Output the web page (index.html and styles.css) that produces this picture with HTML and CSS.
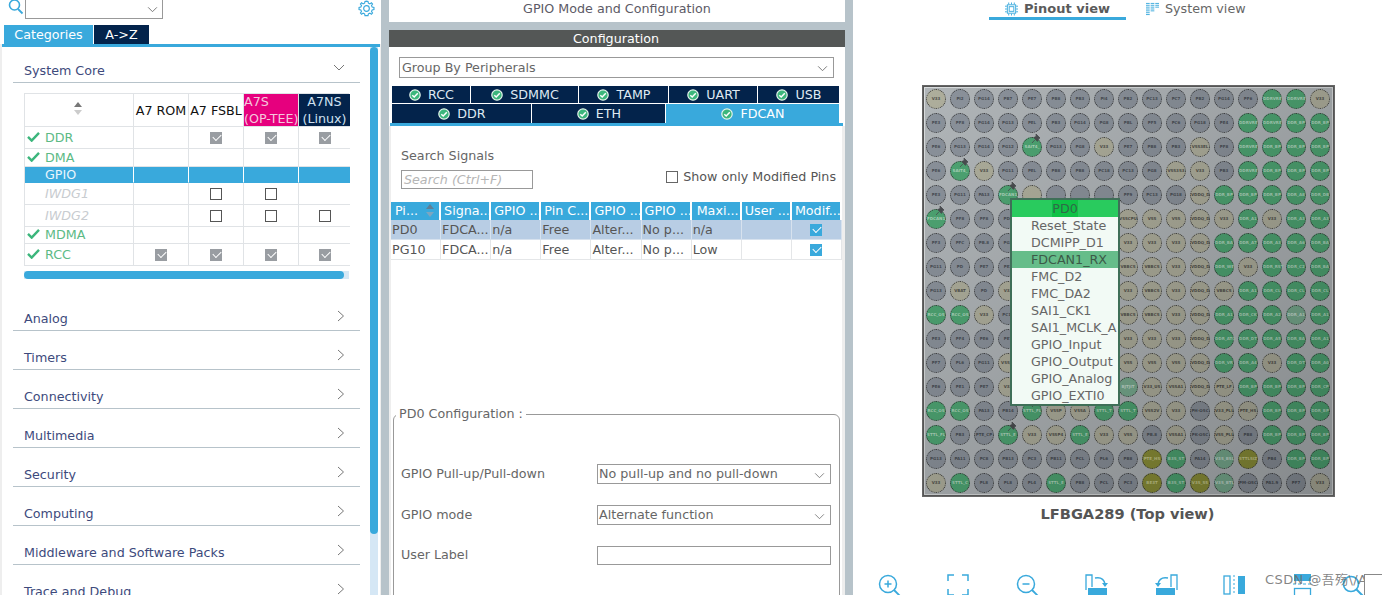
FILE: index.html
```html
<!DOCTYPE html>
<html lang="en">
<head>
<meta charset="utf-8">
<title>GPIO Mode and Configuration</title>
<link rel="stylesheet" href="styles.css">
</head>
<body>
<svg class="defs" width="0" height="0" aria-hidden="true">
  <symbol id="tick" viewBox="0 0 12 12"><circle cx="6" cy="6" r="5.2" fill="#3cb67c" stroke="#e6f4ec" stroke-width="1.2"/><path d="M3.3 6.2 5.2 8 8.8 4.2" fill="none" stroke="#fff" stroke-width="1.5"/></symbol>
  <symbol id="green" viewBox="0 0 14 12"><path d="M1 6.5 5 10.5 13 2" fill="none" stroke="#3cb67c" stroke-width="2.6"/></symbol>
  <symbol id="tack" viewBox="0 0 10 10"><path d="M5 0 9 4 7.6 4.8 6.4 7.4 2.8 3.6 5.2 2.4ZM3.8 6 1 9" fill="#4a4d50" stroke="#4a4d50" stroke-width=".8"/></symbol>
</svg>

<aside class="left">
  <div class="search-row">
    <svg class="search-ico" viewBox="0 0 16 16"><circle cx="6.5" cy="6" r="5" fill="none" stroke="#39a9dc" stroke-width="1.6"/><path d="M10 10l4.5 4.5" stroke="#39a9dc" stroke-width="1.8"/></svg>
    <div class="search-box"><svg class="chev" viewBox="0 0 12 8"><path d="M1 1.5 6 6.5 11 1.5" fill="none" stroke="#777" stroke-width="1.1"/></svg></div>
    <svg class="gear" viewBox="0 0 18 18"><path d="M9 1.2 10.6 1.5 11 3.4 12.6 4.1 14.2 3 15.4 4.2 14.3 5.8 15 7.4 16.9 7.8V10.2L15 10.6 14.3 12.2 15.4 13.8 14.2 15 12.6 13.9 11 14.6 10.6 16.5H7.4L7 14.6 5.4 13.9 3.8 15 2.6 13.8 3.7 12.2 3 10.6 1.1 10.2V7.8L3 7.4 3.7 5.8 2.6 4.2 3.8 3 5.4 4.1 7 3.4 7.4 1.5Z" fill="none" stroke="#39a9dc" stroke-width="1.2"/><circle cx="9" cy="9" r="3" fill="none" stroke="#39a9dc" stroke-width="1.2"/></svg>
  </div>
  <div class="left-tabs">
    <span class="ltab on">Categories</span>
    <span class="ltab">A-&gt;Z</span>
  </div>
  <div class="left-body">
    <div class="cats">
      <div class="cat first"><span>System Core</span><svg class="cat-chev" viewBox="0 0 12 8"><path d="M1 1 6 6 11 1" fill="none" stroke="#777" stroke-width="1"/></svg></div>
      <div class="mx">
        <div class="c hd"><svg class="sort" viewBox="0 0 10 14"><path d="M5 0 9 5H1Z" fill="#777"/><path d="M5 13 9 8H1Z" fill="#ccc"/></svg></div>
        <div class="c hd t">A7 ROM</div><div class="c hd t">A7 FSBL</div><div class="c hd pink">A7S<br>(OP-TEE)</div><div class="c hd navy">A7NS<br>(Linux)</div>

        <div class="c n ok"><svg class="gk"><use href="#green"/></svg>DDR</div><div class="c"></div><div class="c"><i class="cb dis"></i></div><div class="c"><i class="cb dis"></i></div><div class="c"><i class="cb dis"></i></div>
        <div class="c n ok"><svg class="gk"><use href="#green"/></svg>DMA</div><div class="c"></div><div class="c"></div><div class="c"></div><div class="c"></div>
        <div class="c n sel">GPIO</div><div class="c sel"></div><div class="c sel"></div><div class="c sel"></div><div class="c sel"></div>
        <div class="c n off">IWDG1</div><div class="c"></div><div class="c"><i class="cb"></i></div><div class="c"><i class="cb"></i></div><div class="c"></div>
        <div class="c n off">IWDG2</div><div class="c"></div><div class="c"><i class="cb"></i></div><div class="c"><i class="cb"></i></div><div class="c"><i class="cb"></i></div>
        <div class="c n ok"><svg class="gk"><use href="#green"/></svg>MDMA</div><div class="c"></div><div class="c"></div><div class="c"></div><div class="c"></div>
        <div class="c n ok"><svg class="gk"><use href="#green"/></svg>RCC</div><div class="c"><i class="cb dis"></i></div><div class="c"><i class="cb dis"></i></div><div class="c"><i class="cb dis"></i></div><div class="c"><i class="cb dis"></i></div>
      </div>
      <div class="hbar"><div class="hthumb"></div></div>
      <div class="cat"><span>Analog</span><svg class="cat-chev r" viewBox="0 0 8 12"><path d="M1 1 6.5 6 1 11" fill="none" stroke="#777" stroke-width="1"/></svg></div>
      <div class="cat"><span>Timers</span><svg class="cat-chev r" viewBox="0 0 8 12"><path d="M1 1 6.5 6 1 11" fill="none" stroke="#777" stroke-width="1"/></svg></div>
      <div class="cat"><span>Connectivity</span><svg class="cat-chev r" viewBox="0 0 8 12"><path d="M1 1 6.5 6 1 11" fill="none" stroke="#777" stroke-width="1"/></svg></div>
      <div class="cat"><span>Multimedia</span><svg class="cat-chev r" viewBox="0 0 8 12"><path d="M1 1 6.5 6 1 11" fill="none" stroke="#777" stroke-width="1"/></svg></div>
      <div class="cat"><span>Security</span><svg class="cat-chev r" viewBox="0 0 8 12"><path d="M1 1 6.5 6 1 11" fill="none" stroke="#777" stroke-width="1"/></svg></div>
      <div class="cat"><span>Computing</span><svg class="cat-chev r" viewBox="0 0 8 12"><path d="M1 1 6.5 6 1 11" fill="none" stroke="#777" stroke-width="1"/></svg></div>
      <div class="cat"><span>Middleware and Software Packs</span><svg class="cat-chev r" viewBox="0 0 8 12"><path d="M1 1 6.5 6 1 11" fill="none" stroke="#777" stroke-width="1"/></svg></div>
      <div class="cat"><span>Trace and Debug</span><svg class="cat-chev r" viewBox="0 0 8 12"><path d="M1 1 6.5 6 1 11" fill="none" stroke="#777" stroke-width="1"/></svg></div>
    </div>
    <div class="vbar"><div class="vthumb"></div></div>
  </div>
</aside>

<main class="mid">
  <h1 class="mid-title">GPIO Mode and Configuration</h1>
  <div class="mid-gap"></div>
  <div class="conf-bar">Configuration</div>
  <div class="sel-box group">Group By Peripherals<svg class="chev" viewBox="0 0 12 8"><path d="M1 1.5 6 6.5 11 1.5" fill="none" stroke="#777" stroke-width="1.1"/></svg></div>
  <div class="ptabs r1">
    <span class="pt w78"><svg class="tk"><use href="#tick"/></svg>RCC</span>
    <span class="pt w107"><svg class="tk"><use href="#tick"/></svg>SDMMC</span>
    <span class="pt w89"><svg class="tk"><use href="#tick"/></svg>TAMP</span>
    <span class="pt w88"><svg class="tk"><use href="#tick"/></svg>UART</span>
    <span class="pt w81"><svg class="tk"><use href="#tick"/></svg>USB</span>
  </div>
  <div class="ptabs r2">
    <span class="pt w139"><svg class="tk"><use href="#tick"/></svg>DDR</span>
    <span class="pt w133"><svg class="tk"><use href="#tick"/></svg>ETH</span>
    <span class="pt w173 act"><svg class="tk"><use href="#tick"/></svg>FDCAN</span>
  </div>
  <div class="tabline"></div>
  <div class="search-sig">
    <div class="ss-left">
      <label class="lbl">Search Signals</label>
      <div class="ph">Search (Ctrl+F)</div>
    </div>
    <div class="only"><i class="cb big"></i>Show only Modified Pins</div>
  </div>
  <table class="sig">
    <thead><tr>
      <th class="pi">Pi...<svg class="sort2" viewBox="0 0 10 14"><path d="M5 0 9 5H1Z" fill="#5d7f96"/><path d="M5 13 9 8H1Z" fill="#7da6c0"/></svg></th><th>Signa...</th><th>GPIO ...</th><th>Pin C...</th><th>GPIO ...</th><th>GPIO ...</th><th class="mx-c">Maxi...</th><th>User ...</th><th>Modif...</th>
    </tr></thead>
    <tbody>
      <tr class="hl"><td>PD0</td><td>FDCA...</td><td>n/a</td><td>Free</td><td>Alter...</td><td>No p...</td><td>n/a</td><td></td><td class="cc"><i class="cb blue"></i></td></tr>
      <tr><td>PG10</td><td>FDCA...</td><td>n/a</td><td>Free</td><td>Alter...</td><td>No p...</td><td>Low</td><td></td><td class="cc"><i class="cb blue"></i></td></tr>
    </tbody>
  </table>
  <fieldset class="pd0">
    <legend>PD0 Configuration :</legend>
    <div class="f-row r-a"><span class="f-l">GPIO Pull-up/Pull-down</span><div class="sel-box f">No pull-up and no pull-down<svg class="chev" viewBox="0 0 12 8"><path d="M1 1.5 6 6.5 11 1.5" fill="none" stroke="#777" stroke-width="1"/></svg></div></div>
    <div class="f-row"><span class="f-l">GPIO mode</span><div class="sel-box f">Alternate function<svg class="chev" viewBox="0 0 12 8"><path d="M1 1.5 6 6.5 11 1.5" fill="none" stroke="#777" stroke-width="1"/></svg></div></div>
    <div class="f-row last"><span class="f-l">User Label</span><div class="sel-box f short"></div></div>
  </fieldset>
</main>

<section class="right">
  <div class="views">
    <div class="view on"><svg class="v-ico" viewBox="0 0 14 14"><rect x="2.5" y="2.5" width="9" height="9" fill="none" stroke="#39a9dc"/><rect x="4.5" y="4.5" width="5" height="5" fill="none" stroke="#39a9dc"/><path d="M4 0v2M7 0v2M10 0v2M4 12v2M7 12v2M10 12v2M0 4h2M0 7h2M0 10h2M12 4h2M12 7h2M12 10h2" stroke="#39a9dc"/></svg>Pinout view</div>
    <div class="view"><svg class="v-ico" viewBox="0 0 14 14"><path d="M0 1h4M5 1h4M10 1h4M0 3h4M5 3h4M10 3h4M0 5h4M5 5h4M10 5h4M0 7h4M5 7h4M0 9h4M5 9h4M0 11h4M0 13h4" stroke="#39a9dc"/></svg>System view</div>
  </div>

  <div class="chip">
    <div class="pins">
      <span class="pin b">V33</span><span class="pin g">PI2</span><span class="pin g">PG14</span><span class="pin g">PB7</span><span class="pin g">PE7</span><span class="pin g">PB8</span><span class="pin g">PB3</span><span class="pin g">PI4</span><span class="pin g">PB2</span><span class="pin g">PC13</span><span class="pin g">PC7</span><span class="pin g">PB2</span><span class="pin g">PG14</span><span class="pin g">PF6</span><span class="pin G">DDRVRE</span><span class="pin G">DDRVRE</span><span class="pin b">V33</span>
      <span class="pin g">PE3</span><span class="pin g">PF8</span><span class="pin g">PG14</span><span class="pin g">PG13</span><span class="pin g">PEL</span><span class="pin g">PB3</span><span class="pin g">PG14</span><span class="pin g">PG8</span><span class="pin g">PBL</span><span class="pin g">PF5</span><span class="pin g">PC6</span><span class="pin g">PG18</span><span class="pin g">PE4</span><span class="pin G">DDRVRE</span><span class="pin G">DDRVRE</span><span class="pin G">DDR_BP</span><span class="pin G">DDR_BP</span>
      <span class="pin g">PE6</span><span class="pin g">PG13</span><span class="pin g">PG14</span><span class="pin g">PG12</span><span class="pin G tacked"><svg class="tack"><use href="#tack"/></svg>SAIT4_</span><span class="pin g">PG13</span><span class="pin g">PG8</span><span class="pin b">V33</span><span class="pin g">PE7</span><span class="pin g">PB8</span><span class="pin g">PB3</span><span class="pin b">VSS3EL</span><span class="pin g">PF8</span><span class="pin G">DDRVRE</span><span class="pin G">DDR_BP</span><span class="pin G">DDR_BP</span><span class="pin G">DDR_BP</span>
      <span class="pin g">PE6</span><span class="pin G tacked"><svg class="tack"><use href="#tack"/></svg>SAIT4_</span><span class="pin b">V33</span><span class="pin g">PG11</span><span class="pin g">PEL</span><span class="pin g">PB8</span><span class="pin g">PB8</span><span class="pin g">PC18</span><span class="pin g">PC13</span><span class="pin g">PG8</span><span class="pin b">VSS3S3</span><span class="pin b">V33</span><span class="pin g">PB3</span><span class="pin G">DDRVRE</span><span class="pin G">DDR_BP</span><span class="pin G">DDR_BP</span><span class="pin G">DDR_BP</span>
      <span class="pin g">PE3</span><span class="pin g">PG11</span><span class="pin g">PA13</span><span class="pin G tacked"><svg class="tack"><use href="#tack"/></svg>FDCAN1_</span><span class="pin b"></span><span class="pin g"></span><span class="pin g"></span><span class="pin g"></span><span class="pin g">PF9</span><span class="pin g">PC13</span><span class="pin g">PG18</span><span class="pin b">VDDQ_D</span><span class="pin G">DDR_BP</span><span class="pin G">DDR_BP</span><span class="pin G">DDR_BP</span><span class="pin G">DDR_A8</span><span class="pin G">DDR_DB</span>
      <span class="pin G tacked"><svg class="tack"><use href="#tack"/></svg>FDCAN1_</span><span class="pin g">PF8</span><span class="pin g">PF8</span><span class="pin g">PD0</span><span class="pin g"></span><span class="pin g"></span><span class="pin g"></span><span class="pin g"></span><span class="pin b">VSSCPU</span><span class="pin b">VSS</span><span class="pin b">VSS</span><span class="pin b">VDDQ_D</span><span class="pin b">V33</span><span class="pin G">DDR_A1</span><span class="pin b">V33</span><span class="pin G">DDR_A3</span><span class="pin G">DDR_A3</span>
      <span class="pin g">PF3</span><span class="pin g">PFC</span><span class="pin g">PB.8</span><span class="pin g">PG1</span><span class="pin g"></span><span class="pin g"></span><span class="pin g"></span><span class="pin g"></span><span class="pin b">V33</span><span class="pin b">V33</span><span class="pin b">V33</span><span class="pin b">VDDQ_D</span><span class="pin G">DDR_BA</span><span class="pin G">DDR_A7</span><span class="pin G">DDR_A3</span><span class="pin G">DDR_A6</span><span class="pin G">DDR_BA</span>
      <span class="pin g">PG11</span><span class="pin g">PD</span><span class="pin g">PE7</span><span class="pin g">PE2</span><span class="pin g"></span><span class="pin g"></span><span class="pin g"></span><span class="pin g"></span><span class="pin b">VBBCS</span><span class="pin b">VBBCS</span><span class="pin b">V33</span><span class="pin b">VDDQ_D</span><span class="pin G">DDR_WE</span><span class="pin b">V33</span><span class="pin G">DDR_RST</span><span class="pin G">DDR_C2</span><span class="pin G">DDR_BA</span>
      <span class="pin g">PG13</span><span class="pin b">VBAT</span><span class="pin g">PD</span><span class="pin b">V33</span><span class="pin g"></span><span class="pin g"></span><span class="pin g"></span><span class="pin g"></span><span class="pin b">V33</span><span class="pin b">VBBCS</span><span class="pin b">V33</span><span class="pin b">VDDQ_D</span><span class="pin b">VBBCS</span><span class="pin G">DDR_A1</span><span class="pin G">DDR_CL</span><span class="pin G">DDR_CL</span><span class="pin G">DDR_CL</span>
      <span class="pin G">RCC_OS</span><span class="pin G">RCC_OS</span><span class="pin b">V33</span><span class="pin g">PC14</span><span class="pin g"></span><span class="pin g"></span><span class="pin g"></span><span class="pin g"></span><span class="pin b">VBBCS</span><span class="pin b">VBBCS</span><span class="pin b">V33</span><span class="pin b">VDDQ_D</span><span class="pin G">DDR_A1</span><span class="pin G">DDR_CK</span><span class="pin G">DDR_A2</span><span class="pin L">DDR_A1</span><span class="pin G">DDR_A1</span>
      <span class="pin g">PE3</span><span class="pin g">PF4</span><span class="pin g">PE6</span><span class="pin g">PE7</span><span class="pin g"></span><span class="pin g"></span><span class="pin g"></span><span class="pin g"></span><span class="pin b">V33</span><span class="pin b">V33</span><span class="pin b">V33</span><span class="pin b">VDDQ_D</span><span class="pin G">DDR_ATO</span><span class="pin G">DDR_DT</span><span class="pin G">DDR_A5</span><span class="pin G">DDR_BA</span><span class="pin G">DDR_A1</span>
      <span class="pin g">PF7</span><span class="pin g">PL6</span><span class="pin g">PG11</span><span class="pin b">VSS_A</span><span class="pin g"></span><span class="pin g"></span><span class="pin g"></span><span class="pin g"></span><span class="pin b">VSS</span><span class="pin b">VSS</span><span class="pin b">VSS</span><span class="pin b">VDDQ_D</span><span class="pin G">DDR_VR</span><span class="pin G">DDR_A4</span><span class="pin b">V33</span><span class="pin G">DDR_DT</span><span class="pin G">DDR_A0</span>
      <span class="pin g">PE6</span><span class="pin g">PE1</span><span class="pin g">PE7</span><span class="pin b">V33</span><span class="pin g"></span><span class="pin g"></span><span class="pin g"></span><span class="pin g"></span><span class="pin L">BJTJIT</span><span class="pin b">V33_US</span><span class="pin b">VSSA1</span><span class="pin b">VDDQ_D</span><span class="pin b">PTE_LF</span><span class="pin G">DDR_BP</span><span class="pin G">DDR_BP</span><span class="pin G">DDR_BP</span><span class="pin G">DDR_CP</span>
      <span class="pin G">RCC_OS</span><span class="pin G">RCC_OS</span><span class="pin g">PA13</span><span class="pin g">PB14</span><span class="pin G tacked"><svg class="tack"><use href="#tack"/></svg>STTL_FL</span><span class="pin b">VSSP</span><span class="pin b">VSSA</span><span class="pin G">STTL_T</span><span class="pin G">STTL_T</span><span class="pin b">VSS2V</span><span class="pin b">V33</span><span class="pin g">PH-OSC</span><span class="pin b">V33_PLL</span><span class="pin b">PTE_HS</span><span class="pin G">DDR_BP</span><span class="pin G">DDR_BP</span><span class="pin G">DDR_BP</span>
      <span class="pin G">STTL_FL</span><span class="pin g">PB3</span><span class="pin g">PTE_CP</span><span class="pin G tacked"><svg class="tack"><use href="#tack"/></svg>STTL_E</span><span class="pin b">V33</span><span class="pin b">VSSP4</span><span class="pin G">STTL_E</span><span class="pin b">V33</span><span class="pin b">VSS</span><span class="pin g">PB.8</span><span class="pin b">VSSA1</span><span class="pin g">PK-OSC</span><span class="pin b">VSS_PLL</span><span class="pin g">PB8</span><span class="pin G">DDR_BP</span><span class="pin G">DDR_BP</span><span class="pin G">DDR_BP</span>
      <span class="pin g">PG13</span><span class="pin g">PA11</span><span class="pin g">PC8</span><span class="pin g">PB13</span><span class="pin g">PC3</span><span class="pin g">PB11</span><span class="pin g">PCL</span><span class="pin g">PL6</span><span class="pin g">PB8</span><span class="pin O">PTE_HS</span><span class="pin G">B3S_ST</span><span class="pin g">PA14</span><span class="pin L">V3S_BSL</span><span class="pin O">STTLSIZ</span><span class="pin g">PB4</span><span class="pin G">DDR_BP</span><span class="pin G">DDR_BP</span>
      <span class="pin b">V33</span><span class="pin G">STTL_C</span><span class="pin g">PL8</span><span class="pin g">PL8</span><span class="pin g">PL4</span><span class="pin G">STTL_E</span><span class="pin g">PB8</span><span class="pin g">PCL</span><span class="pin g">PC3</span><span class="pin O">BE3T</span><span class="pin G">B3S_ST</span><span class="pin O">V3S_SS</span><span class="pin L">V3S_BTL</span><span class="pin g">PM-OSC</span><span class="pin g">PA1.9</span><span class="pin g">PF7</span><span class="pin b">V33</span>
    </div>
    <div class="popup">
      <div class="pop-h"><span>PD0</span></div>
      <div class="pop-i">Reset_State</div>
      <div class="pop-i">DCMIPP_D1</div>
      <div class="pop-i cur">FDCAN1_RX</div>
      <div class="pop-i">FMC_D2</div>
      <div class="pop-i">FMC_DA2</div>
      <div class="pop-i">SAI1_CK1</div>
      <div class="pop-i">SAI1_MCLK_A</div>
      <div class="pop-i">GPIO_Input</div>
      <div class="pop-i">GPIO_Output</div>
      <div class="pop-i">GPIO_Analog</div>
      <div class="pop-i">GPIO_EXTI0</div>
    </div>
  </div>
  <div class="caption">LFBGA289 (Top view)</div>

  <div class="toolbar">
    <svg class="tool" viewBox="0 0 24 24"><circle cx="10" cy="10" r="8.5" fill="none" stroke="#39a9dc" stroke-width="1.5"/><path d="M6.5 10h7M10 6.5v7" stroke="#39a9dc" stroke-width="1.5"/><path d="M16 16l7 7" stroke="#39a9dc" stroke-width="1.8"/></svg>
    <svg class="tool" viewBox="0 0 24 24"><path d="M1 7V1h6M15 1h6v6M21 15v6h-6M7 21H1v-6" fill="none" stroke="#39a9dc" stroke-width="1.5"/></svg>
    <svg class="tool" viewBox="0 0 24 24"><circle cx="10" cy="10" r="8.5" fill="none" stroke="#39a9dc" stroke-width="1.5"/><path d="M6.5 10h7" stroke="#39a9dc" stroke-width="1.5"/><path d="M16 16l7 7" stroke="#39a9dc" stroke-width="1.8"/></svg>
    <svg class="tool" viewBox="0 0 24 24"><path d="M1 16V1h6v12" fill="none" stroke="#39a9dc" stroke-width="1.3"/><path d="M10 4c5-1 9 1 10 6" fill="none" stroke="#39a9dc" stroke-width="1.4"/><path d="M17 9h6l-3 4Z" fill="#39a9dc"/><rect x="3" y="14" width="19" height="8" fill="#39a9dc"/></svg>
    <svg class="tool" viewBox="0 0 24 24"><path d="M23 16V1h-6v12" fill="none" stroke="#39a9dc" stroke-width="1.3"/><path d="M14 4C9 3 5 5 4 10" fill="none" stroke="#39a9dc" stroke-width="1.4"/><path d="M7 9H1l3 4Z" fill="#39a9dc"/><rect x="2" y="14" width="19" height="8" fill="#39a9dc"/></svg>
    <svg class="tool" viewBox="0 0 24 24"><rect x="1" y="2" width="6" height="18" fill="none" stroke="#39a9dc" stroke-width="1.3"/><path d="M11 1v22" stroke="#39a9dc" stroke-dasharray="2 2"/><rect x="15" y="2" width="7" height="18" fill="#39a9dc"/></svg>
    <svg class="tool short" viewBox="0 0 24 24"><rect x="2" y="0" width="17" height="7" fill="#39a9dc"/><path d="M1 10h20" stroke="#39a9dc" stroke-dasharray="3 2"/><rect x="2.500" y="14.500" width="16" height="12" fill="none" stroke="#39a9dc" stroke-width="1.300"/></svg>
    <svg class="tool" viewBox="0 0 24 24"><circle cx="9" cy="10" r="7.500" fill="none" stroke="#39a9dc" stroke-width="1.700"/><path d="M14.500 15.500l7 7" stroke="#39a9dc" stroke-width="2"/></svg>
  </div>
  <div class="mark">CSDN @吾殇\/Ak</div>
  <div class="corner"></div>
</section>
</body>
</html>
```

FILE: styles.css
```css
* { box-sizing: border-box; }
html, body { margin: 0; height: 595px; overflow: hidden; }
body {
  display: flex;
  background: #b7c3ca;
  font: 12.7px/16px "DejaVu Sans", sans-serif;
  color: #666;
}
.defs { position: absolute; }

/* left */
.left { width: 381px; height: 595px; background: #fff; overflow: hidden; flex: none; }
.search-row { display: flex; height: 25px; align-items: flex-start; padding-left: 8px; }
.search-ico { width: 16px; height: 16px; margin-top: -1px; }
.search-box { width: 138px; height: 20px; margin: -1px 0 0 1px; border: 1px solid #999; position: relative; }
.search-box .chev { position: absolute; right: 4px; top: 6px; width: 11px; height: 7px; }
.gear { width: 17px; height: 17px; margin-left: 195px; }
.left-tabs { display: flex; height: 19px; padding-left: 4px; gap: 1px; }
.ltab { background: #03234b; color: #fff; width: 55px; text-align: center; line-height: 20px; }
.ltab.on { background: #39a9dc; width: 89px; }
.left-body { display: flex; height: 551px; border-top: 3px solid #39a9dc; margin: 0 1px 0 2px; box-shadow: -2px 0 0 #eeeeee, 1px 0 0 #eeeeee; }
.cats { width: 368px; padding-left: 11px; }
.cat {
  width: 347px; height: 39px; display: flex; align-items: flex-end; justify-content: space-between;
  padding: 0 15px 3px 11px; border-bottom: 1px solid #b7c3ca; color: #3d4a7c;
}
.cat.first { height: 36px; padding-bottom: 3px; }
.cat-chev { width: 12px; height: 8px; margin-bottom: 7px; }
.cat-chev.r { width: 8px; height: 12px; margin-bottom: 5px; }
.mx {
  display: grid; width: 325px; margin: 10px 0 0 11px;
  grid-template-columns: 109px 55px 55px 55px 51px;
  grid-template-rows: 33px 22px 18px 16px 22px 22px 17px 22px;
  border-top: 1px solid #e0e3e6; border-left: 1px solid #e0e3e6;
}
.c { border-right: 1px solid #e0e3e6; border-bottom: 1px solid #e0e3e6; display: flex; align-items: center; justify-content: center; }
.c:nth-child(5n) { border-right: 0; }
.hd { color: #000; line-height: 17px; white-space: nowrap; overflow: hidden; }
.hd.t { color: #111; }
.pink { background: #e6007e; color: #f5c6dc; text-align: left; justify-content: flex-start; }
.navy { background: #03234b; color: #cfe0ef; text-align: center; }
.sort { width: 10px; height: 14px; margin-left: -2px; margin-bottom: 2px; }
.n { justify-content: flex-start; padding-left: 20px; color: #5cba85; position: relative; }
.gk { position: absolute; left: 2px; top: 50%; margin-top: -7px; width: 13px; height: 11px; }
.off { color: #c8ccd0; font-style: italic; }
.sel { background: #39a9dc; color: #fff; border-color: #fff; border-bottom-color: #39a9dc; }
.n.sel { color: #e8f5fc; }
.cb { display: block; width: 12px; height: 12px; border: 1px solid #555; background: #fff; }
.cb.dis { border: 0; background: #999da2; position: relative; }
.cb.dis::after, .cb.blue::after {
  content: ""; position: absolute; left: 3px; top: 2px; width: 7px; height: 4px;
  border-left: 1.5px solid #fff; border-bottom: 1.5px solid #fff; transform: rotate(-45deg);
}
.cb.blue { border: 0; background: #39a9dc; position: relative; }
.cb.big { width: 12px; height: 12px; margin-right: 5px; border-color: #666; }
.hbar { width: 325px; height: 8px; margin: 5px 0 13px 11px; background: #d6e8f5; }
.hthumb { width: 320px; height: 8px; border-radius: 4px; background: #39a9dc; }
.vbar { width: 8px; background: #d5e7f5; }
.vthumb { height: 487px; background: #39a9dc; border-radius: 4px; }

/* middle */
.mid {
  width: 456px; margin-left: 8px; flex: none; height: 595px; overflow: hidden;
  background: #fff linear-gradient(to right, #eeeeee 2px, #fff 2px, #fff 453px, #eeeeee 453px) no-repeat 0 126px / 100% 469px;
}
.mid-title { margin: 0; height: 22px; font: 400 12.7px/17px "DejaVu Sans", sans-serif; color: #5c5a66; text-align: center; }
.mid-gap { height: 8px; background: #b7c3ca; }
.conf-bar { height: 17px; background: #545756; color: #fff; text-align: center; line-height: 17px; padding-right: 2px; }
.sel-box { border: 1px solid #999; position: relative; color: #666; background: #fff; }
.sel-box .chev { position: absolute; right: 5px; top: 7px; width: 11px; height: 7px; }
.group { width: 435px; height: 21px; margin: 10px 0 0 10px; padding-left: 2px; line-height: 19px; }
.ptabs { display: flex; gap: 1px; margin-left: 3px; width: 447px; }
.r1 { height: 17px; margin-top: 8px; }
.r2 { height: 19px; margin-top: 1px; }
.pt { background: #03234b; color: #dfe9f2; display: flex; align-items: center; justify-content: center; gap: 7px; padding-left: 1px; }
.r1 .pt { padding-top: 1px; }
.w78 { width: 78px; } .w107 { width: 107px; } .w89 { width: 89px; } .w88 { width: 88px; } .w81 { width: 81px; }
.w139 { width: 139px; } .w133 { width: 133px; } .w173 { width: 173px; }
.act { background: #39a9dc; color: #fff; }
.tk { width: 12px; height: 12px; flex: none; }
.tabline { height: 3px; background: #39a9dc; margin: 0 2px 0 1px; }
.search-sig { display: flex; justify-content: space-between; align-items: flex-end; padding: 22px 9px 0 12px; height: 63px; }
.ss-left { display: flex; flex-direction: column; }
.lbl { color: #666; margin-bottom: 6px; }
.ph { width: 132px; height: 19px; border: 1px solid #999; font-style: italic; color: #b5b5b5; padding-left: 2px; line-height: 17px; }
.only { display: flex; align-items: center; color: #555; height: 19px; margin-bottom: 3px; }
.sig { margin: 13px 0 0 2px; border-collapse: separate; border-spacing: 0; table-layout: fixed; width: 451px; }
.sig th {
  width: 50px; height: 18px; padding: 0 0 0 3px; background: #39a9dc; color: #fff; font-weight: 400;
  text-align: left; white-space: nowrap; overflow: hidden; border-right: 2px solid #fff; position: relative;
}
.sig th.pi { padding-left: 4px; }
.sig th.mx-c { padding-left: 5px; }
.sort2 { position: absolute; right: 4px; top: 2px; width: 10px; height: 14px; }
.sig td { height: 20px; padding: 0 0 0 1px; white-space: nowrap; overflow: hidden; border-right: 1px solid #e4e6e8; border-bottom: 1px solid #e4e6e8; color: #555; background: #fff; }
.sig .hl td { background: #b8cde4; border-color: #d7e2ee; }
.sig td.cc { padding: 0; }
.sig td.cc .cb { margin: 0 auto; }
.pd0 { margin: 146px 0 0 4px; width: 447px; height: 300px; border: 1px solid #999; border-radius: 6px; padding: 0; background: #fff; }
.pd0 legend { margin-left: 2px; padding: 0 3px 0 3px; color: #666; line-height: 16px; }
.f-row { display: flex; align-items: center; height: 20px; padding-left: 7px; margin-top: 21px; }
.f-row.last { margin-top: 20px; }
.r-a { margin-top: 42px; }
.f-l { width: 196px; color: #666; }
.sel-box.f { width: 234px; height: 20px; padding-left: 1px; line-height: 18px; }
.sel-box.short { height: 19px; }

/* right */
.right { width: 529px; margin-left: 8px; height: 595px; background: #fff; position: relative; overflow: hidden; flex: none; }
.views { display: flex; height: 20px; padding-left: 136px; gap: 20px; }
.view { display: flex; gap: 6px; justify-content: center; color: #666; padding-top: 1px; }
.view.on { width: 137px; border-bottom: 3px solid #39a9dc; font-weight: 700; font-size: 13px; color: #5b5b5b; }
.v-ico { width: 13px; height: 14px; margin-top: 1px; }
.chip {
  position: relative; width: 413px; height: 412px; margin: 65px 0 0 69px;
  border: 2px solid #555; outline: 1px solid #666; outline-offset: -1px;
  background: #b0b5b8; padding: 1px 0 0 1px;
  box-shadow: inset 0 0 0 1px #d9dcdd;
}
.chip::after { content: ""; position: absolute; inset: 0; background: linear-gradient(135deg, rgba(0,0,0,0), rgba(0,0,0,.24)); }
.pins { display: grid; grid-template-columns: repeat(17, 20px); grid-auto-rows: 20px; gap: 4px; padding: 1px; }
.pin {
  position: relative; width: 20px; height: 20px; border-radius: 50%; border: 1px dotted #333;
  font-size: 4px; line-height: 18px; font-weight: 700; text-align: center; white-space: nowrap;
}
.g { background: #8b929b; color: #484d54; }
.b { background: #aeae9c; color: #50504a; }
.G { background: #4ea573; color: #add5bd; }
.L { background: #78ab8f; color: #c4dccf; }
.O { background: #8c9038; color: #c9cc90; }
.tack { position: absolute; left: 8px; top: -4px; width: 10px; height: 10px; }
.popup {
  position: absolute; z-index: 2; left: 86px; top: 111px; width: 110px; height: 208px;
  border: 2px solid #3f6f58; background: #f2faf5; overflow: hidden;
}
.pop-h { height: 17px; background: rgba(30, 200, 85, .95); text-align: center; line-height: 17px; color: #2f6a48; }
.pop-h span { background: #0fc246; display: inline-block; }
.pop-i { height: 17px; line-height: 17px; padding-left: 19px; color: #666; white-space: nowrap; }
.pop-i.cur { background: #66bd8a; color: #3c5a48; }
.caption { width: 413px; margin: 8px 0 0 68px; font-weight: 700; font-size: 14.6px; line-height: 17px; color: #555; text-align: center; }
.toolbar { display: flex; gap: 45px; margin: 52px 0 0 25px; }
.tool { width: 24px; height: 24px; flex: none; }
.tool.short { margin-right: -19px; }
.mark { position: absolute; z-index: 3; left: 412px; top: 572px; color: rgba(110, 110, 110, .85); font: 13px/16px "DejaVu Sans", "Noto Sans CJK SC", sans-serif; letter-spacing: .4px; white-space: nowrap; }
.corner { position: absolute; z-index: 3; right: 0; bottom: 0; width: 18px; height: 21px; background: #fff; border-left: 1px solid #888; border-top: 1px solid #888; }
```
